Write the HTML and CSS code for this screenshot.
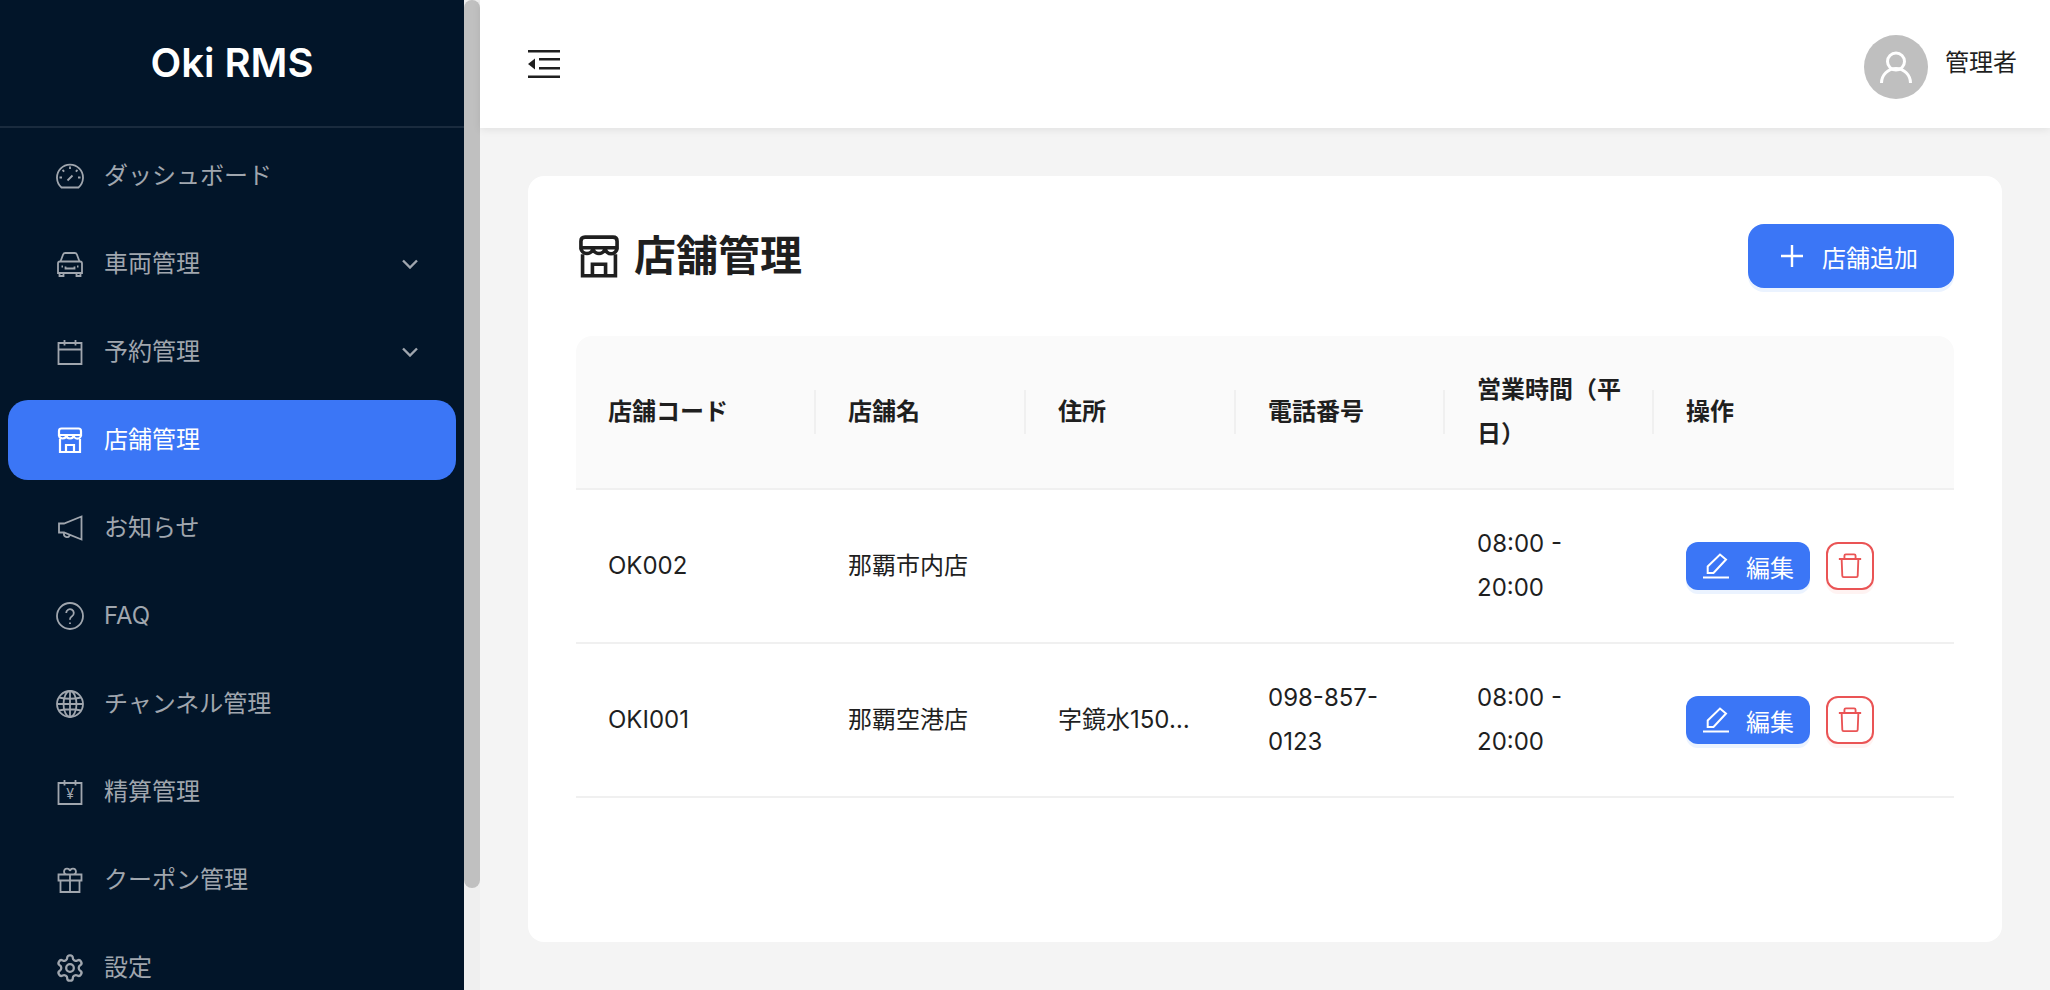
FILE: index.html
```html
<!DOCTYPE html>
<html lang="ja">
<head>
    <meta charset="UTF-8">
    <meta name="viewport" content="width=device-width, initial-scale=1.0">
    <title>Oki RMS - 店舗管理</title>
    <link rel="stylesheet" href="styles.css">
</head>
<body>
    <div class="sidebar">
        <div class="sidebar-inner">
            <div class="logo">Oki RMS</div>
            <ul class="menu">
                <li>
                    <svg class="icon" viewBox="0 0 28 28"><path d="M5.5 25.5h17a13 13 0 1 0-17 0z"/><path d="M14 4.5v2.5M6.5 8l1.7 1.7M21.5 8l-1.7 1.7M3.5 15.5H6M22 15.5h2.5M11.5 18.5l5-5"/></svg>
                    <span>ダッシュボード</span>
                </li>
                <li>
                    <svg class="icon" viewBox="0 0 28 28"><path d="M4.5 11.5l2.7-7.2Q7.700 3 9.200 3h9.600q1.500 0 2 1.300l2.700 7.200"/><path d="M4 11.500h20q2 0 2 2V23H2v-9.500q0-2 2-2z"/><path d="M3.500 23v3h4v-3M20.500 23v3h4v-3M9.500 16.500v2h9v-2M5.500 16.500h1.500M21 16.500h1.500"/></svg>
                    <span>車両管理</span>
                    <svg class="chevron" viewBox="0 0 16 10"><path d="M1 1.500l7 7 7-7"/></svg>
                </li>
                <li>
                    <svg class="icon" viewBox="0 0 28 28"><path d="M2.500 5h23v21h-23zM2.500 11.500h23M8.500 2v5.500M19.500 2v5.500"/></svg>
                    <span>予約管理</span>
                    <svg class="chevron" viewBox="0 0 16 10"><path d="M1 1.500l7 7 7-7"/></svg>
                </li>
                <li class="active">
                    <svg class="icon" viewBox="0 0 28 28"><path d="M3 9V5q0-2.500 2.500-2.500h17Q25 2.500 25 5v4zM3 9a3.670 3.670 0 0 0 7.330 0 3.670 3.670 0 0 0 7.330 0A3.670 3.670 0 0 0 25 9"/><path d="M4 13v13h20V13M10 26v-7h8v7"/></svg>
                    <span>店舗管理</span>
                </li>
                <li>
                    <svg class="icon" viewBox="0 0 28 28"><path d="M25.500 2.500v23L8 18.500H3v-9h5zM8 19.500a3 3 0 0 0 5.600 2"/></svg>
                    <span>お知らせ</span>
                </li>
                <li>
                    <svg class="icon" viewBox="0 0 28 28"><circle cx="14" cy="14" r="13"/><path d="M10.200 11a3.800 3.800 0 1 1 5.800 3.200c-1.300.8-2 1.500-2 3v.6M14 20.500v1.500"/></svg>
                    <span>FAQ</span>
                </li>
                <li>
                    <svg class="icon" viewBox="0 0 28 28"><circle cx="14" cy="14" r="13"/><ellipse cx="14" cy="14" rx="6.500" ry="13"/><path d="M14 1v26M1 14h26M3 7.500q11 2.500 22 0M3 20.500q11-2.500 22 0"/></svg>
                    <span>チャンネル管理</span>
                </li>
                <li>
                    <svg class="icon" viewBox="0 0 28 28"><path d="M2.500 5h23v21h-23zM8.500 2v5.500M19.500 2v5.500"/><text class="yen" x="14" y="21" text-anchor="middle">¥</text></svg>
                    <span>精算管理</span>
                </li>
                <li>
                    <svg class="icon" viewBox="0 0 28 28"><path d="M2.500 8.500h23v6h-23zM4.500 14.500v11.500h19V14.500M14 8.500V26M14 8.500h-3.500a3 3 0 1 1 3.500-3.500M14 8.500h3.500A3 3 0 1 0 14 5"/></svg>
                    <span>クーポン管理</span>
                </li>
                <li>
                    <svg class="icon" viewBox="1 1 22 22"><path d="M12.220 2h-.44a2 2 0 0 0-2 2v.18a2 2 0 0 1-1 1.730l-.43.25a2 2 0 0 1-2 0l-.15-.08a2 2 0 0 0-2.730.73l-.22.38a2 2 0 0 0 .73 2.730l.15.1a2 2 0 0 1 1 1.720v.51a2 2 0 0 1-1 1.740l-.15.09a2 2 0 0 0-.73 2.730l.22.38a2 2 0 0 0 2.730.73l.15-.08a2 2 0 0 1 2 0l.43.25a2 2 0 0 1 1 1.730V20a2 2 0 0 0 2 2h.44a2 2 0 0 0 2-2v-.18a2 2 0 0 1 1-1.730l.43-.25a2 2 0 0 1 2 0l.15.08a2 2 0 0 0 2.730-.73l.22-.39a2 2 0 0 0-.73-2.730l-.15-.08a2 2 0 0 1-1-1.740v-.5a2 2 0 0 1 1-1.740l.15-.09a2 2 0 0 0 .73-2.730l-.22-.38a2 2 0 0 0-2.730-.73l-.15.08a2 2 0 0 1-2 0l-.43-.25a2 2 0 0 1-1-1.730V4a2 2 0 0 0-2-2z"/><circle cx="12" cy="12" r="3"/></svg>
                    <span>設定</span>
                </li>
            </ul>
        </div>
        <div class="scroll-track"><div class="scroll-thumb"></div></div>
    </div>

    <div class="main">
        <div class="header">
            <svg class="fold-icon" viewBox="0 0 32 28"><path d="M0 0h32v2.600H0zM11 8h21v2.600H11zM11 17h21v2.600H11zM0 25.400h32V28H0zM0 14l7-5.500v11z"/></svg>
            <div class="user">
                <div class="avatar">
                    <svg viewBox="0 0 64 64"><circle cx="32" cy="26.500" r="8.500"/><path d="M17.500 48a14.500 14.500 0 0 1 29 0"/></svg>
                </div>
                <span>管理者</span>
            </div>
        </div>

        <div class="content">
            <div class="card">
                <div class="card-head">
                    <h1>
                        <svg class="title-icon" viewBox="0 0 28 28"><path d="M3 9V5q0-2.500 2.500-2.500h17Q25 2.500 25 5v4zM3 9a3.670 3.670 0 0 0 7.330 0 3.670 3.670 0 0 0 7.330 0A3.670 3.670 0 0 0 25 9"/><path d="M4 13v13h20V13M10 26v-7h8v7"/></svg>
                        店舗管理
                    </h1>
                    <button class="btn btn-add">
                        <svg viewBox="0 0 24 24"><path d="M12 1v22M1 12h22"/></svg>
                        店舗追加
                    </button>
                </div>

                <table class="store-table">
                    <colgroup>
                        <col class="col-code"><col class="col-name"><col class="col-addr"><col class="col-tel"><col class="col-hours"><col>
                    </colgroup>
                    <thead>
                        <tr>
                            <th>店舗コード</th>
                            <th>店舗名</th>
                            <th>住所</th>
                            <th>電話番号</th>
                            <th>営業時間（平日）</th>
                            <th>操作</th>
                        </tr>
                    </thead>
                    <tbody>
                        <tr>
                            <td>OK002</td>
                            <td>那覇市内店</td>
                            <td></td>
                            <td></td>
                            <td>08:00 - 20:00</td>
                            <td>
                                <div class="actions">
                                    <button class="btn btn-edit">
                                        <svg viewBox="0 0 28 28"><path d="M5.700 21v-6.500L18 2.500l6 5L11.500 21zM1 25.500h26"/></svg>
                                        編集
                                    </button>
                                    <button class="btn-delete" aria-label="削除">
                                        <svg viewBox="0 0 28 28"><path d="M2 6.500h24M8 6.500V3q0-1.500 1.500-1.500h9Q20 1.500 20 3v3.500M5 6.500l.7 18q0 1.500 1.500 1.500h13.600q1.500 0 1.500-1.500l.7-18"/></svg>
                                    </button>
                                </div>
                            </td>
                        </tr>
                        <tr>
                            <td>OKI001</td>
                            <td>那覇空港店</td>
                            <td class="nowrap">字鏡水150…</td>
                            <td>098-857-0123</td>
                            <td>08:00 - 20:00</td>
                            <td>
                                <div class="actions">
                                    <button class="btn btn-edit">
                                        <svg viewBox="0 0 28 28"><path d="M5.700 21v-6.500L18 2.500l6 5L11.500 21zM1 25.500h26"/></svg>
                                        編集
                                    </button>
                                    <button class="btn-delete" aria-label="削除">
                                        <svg viewBox="0 0 28 28"><path d="M2 6.500h24M8 6.500V3q0-1.500 1.500-1.500h9Q20 1.500 20 3v3.500M5 6.500l.7 18q0 1.500 1.500 1.500h13.600q1.500 0 1.500-1.500l.7-18"/></svg>
                                    </button>
                                </div>
                            </td>
                        </tr>
                    </tbody>
                </table>
            </div>
        </div>
    </div>
</body>
</html>
```

FILE: styles.css
```css
* { box-sizing: border-box; }
body { margin: 0; height: 100vh; display: flex; overflow: hidden; background-color: #f4f4f4; color: #1f1f1f; font-family: Inter, 'Noto Sans CJK JP', sans-serif; font-size: 24px; line-height: 44px; }
svg { display: block; flex-shrink: 0; fill: none; stroke: currentColor; }

.sidebar { display: flex; height: 100%; flex-shrink: 0; }
.sidebar-inner { width: 464px; height: 100%; overflow: hidden; background-color: #021529; color: #a0a6ae; }
.logo { height: 128px; display: flex; align-items: center; justify-content: center; border-bottom: 2px solid #1a2b3e; color: #fff; font-size: 40px; font-weight: 600; }
.menu { list-style: none; margin: 0; padding: 8px 8px 0; }
.menu li { display: flex; align-items: center; height: 80px; margin-bottom: 8px; padding: 0 38px 0 48px; border-radius: 20px; }
.menu li span { flex: 1; margin-left: 20px; }
.menu li.active { background-color: #3b76f6; color: #fff; }
.icon { width: 28px; height: 28px; stroke-width: 1.8; }
.menu li.active .icon { stroke-width: 2.2; }
.yen { fill: currentColor; stroke: none; font-size: 14px; }
.chevron { width: 16px; height: 10px; stroke-width: 2.4; }
.scroll-track { width: 16px; background-color: #efefef; }
.scroll-thumb { height: 888px; background-color: #c0c0c0; border-radius: 8px; }

.main { flex: 1; min-width: 0; display: flex; flex-direction: column; }
.header { height: 128px; flex-shrink: 0; display: flex; align-items: center; justify-content: space-between; padding: 0 33px 0 48px; background-color: #fff; box-shadow: 0 2px 8px rgba(0, 0, 0, 0.08); position: relative; }
.fold-icon { width: 32px; height: 28px; fill: #1f1f1f; stroke: none; }
.user { display: flex; align-items: center; gap: 17px; padding-top: 6px; }
.user span { margin-top: -8px; }
.avatar { width: 64px; height: 64px; border-radius: 50%; background-color: #bfbfbf; color: #fff; }
.avatar svg { stroke-width: 3; }

.content { flex: 1; padding: 48px; display: flex; }
.card { flex: 1; padding: 48px; background-color: #fff; border-radius: 16px; }
.card-head { display: flex; align-items: center; justify-content: space-between; height: 64px; margin-bottom: 48px; }
.card-head h1 { display: flex; align-items: center; gap: 12px; margin: 0; font-size: 42px; font-weight: 600; }
.title-icon { width: 46px; height: 46px; stroke-width: 2.2; }

.btn { display: flex; align-items: center; border: none; background-color: #3b76f6; color: #fff; font-family: inherit; font-size: 24px; box-shadow: 0 4px 0 #ebf3ff; }
.btn-add { height: 64px; width: 206px; padding: 0 32px; gap: 18px; border-radius: 16px; }
.btn-add svg { width: 24px; height: 24px; stroke-width: 2.4; }
.btn-edit { height: 48px; width: 124px; padding: 0 16px; gap: 16px; border-radius: 12px; }
.btn-edit svg { width: 28px; height: 28px; stroke-width: 2; }
.btn-delete { display: flex; align-items: center; justify-content: center; width: 48px; height: 48px; padding: 0; border: 2px solid #ea5455; border-radius: 12px; background-color: #fff; color: #ea5455; box-shadow: 0 4px 0 #fff3f2; }
.btn-delete svg { width: 26px; height: 26px; stroke-width: 2; }

.store-table { width: 100%; table-layout: fixed; border-collapse: separate; border-spacing: 0; }
.col-code { width: 240px; }
.col-name { width: 210px; }
.col-addr { width: 210px; }
.col-tel { width: 209px; }
.col-hours { width: 209px; }
.store-table th { position: relative; padding: 32px; background-color: #fafafa; border-bottom: 2px solid #f0f0f0; text-align: left; font-weight: 600; }
.store-table th:first-child { border-top-left-radius: 16px; }
.store-table th:last-child { border-top-right-radius: 16px; }
.store-table th:not(:last-child)::before { content: ''; position: absolute; top: 50%; right: 0; width: 2px; height: 44px; margin-top: -22px; background-color: #f0f0f0; }
.store-table td { padding: 32px; border-bottom: 2px solid #f0f0f0; vertical-align: middle; }
.nowrap { white-space: nowrap; }
.actions { display: flex; align-items: center; gap: 16px; }
```
